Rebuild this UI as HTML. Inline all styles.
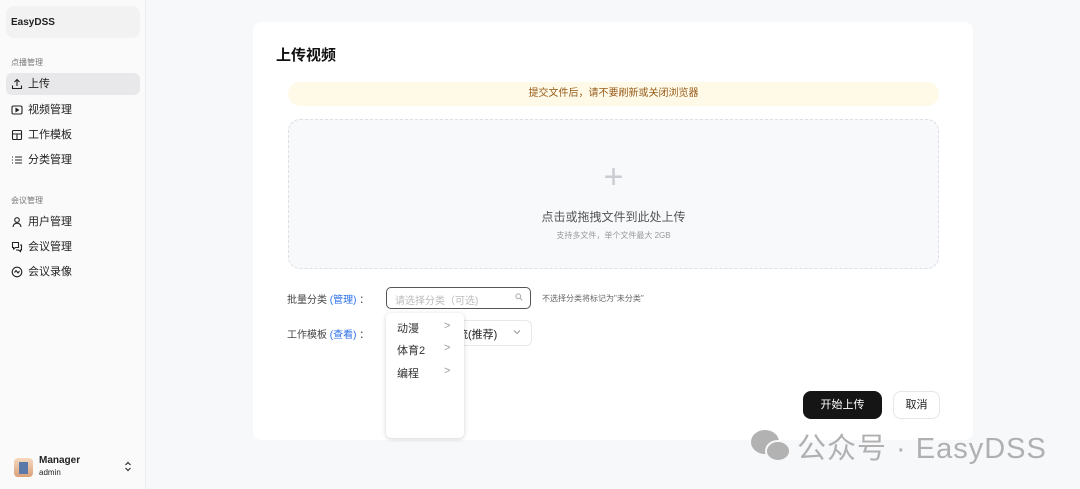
<!DOCTYPE html>
<html><head><meta charset="utf-8"><style>
*{margin:0;padding:0;box-sizing:border-box}
body{width:1080px;height:489px;overflow:hidden;background:#f7f8fa;font-family:"Liberation Sans","Noto Sans CJK SC",sans-serif;position:relative;color:#222}
.abs{position:absolute}
.side{left:0;top:0;width:146px;height:489px;background:#fafafa;border-right:1px solid #ececec}
.brand{left:6px;top:6px;width:134px;height:32px;background:#f2f2f2;border-radius:8px;font-size:10px;font-weight:bold;padding:11px 5px;color:#222}
.sec{font-size:8px;color:#777;left:11px}
.item{left:6px;width:134px;height:22px;border-radius:6px;font-size:11px;line-height:22px;padding-left:22px;color:#222}
.item svg{position:absolute;left:5px;top:5px}
.act{background:#e8e8ea}
.card{left:253px;top:22px;width:720px;height:418px;background:#fff;border-radius:8px}
.blue{color:#2a6ee8}
</style></head><body>
<div class="abs side">
<div class="abs brand">EasyDSS</div>
<div class="abs sec" style="top:57px">点播管理</div>
<div class="abs item act" style="top:73px"><svg width="12" height="12" viewBox="0 0 12 12" fill="none" stroke="#222" stroke-width="1.1"><path d="M6 8V1.5M3.5 4L6 1.5 8.5 4M1.5 7.5v3h9v-3"/></svg>上传</div>
<div class="abs item" style="top:99px"><svg width="12" height="12" viewBox="0 0 12 12" fill="none" stroke="#222" stroke-width="1.1"><rect x="1" y="2" width="10" height="8" rx="1.5"/><path d="M5 4.5v3l2.5-1.5z" fill="#222"/></svg>视频管理</div>
<div class="abs item" style="top:124px"><svg width="12" height="12" viewBox="0 0 12 12" fill="none" stroke="#222" stroke-width="1.1"><rect x="1.5" y="1.5" width="9" height="9" rx="1"/><path d="M1.5 5h9M6 5v5.5"/></svg>工作模板</div>
<div class="abs item" style="top:149px"><svg width="12" height="12" viewBox="0 0 12 12" fill="none" stroke="#222" stroke-width="1.1"><path d="M1 3h1M4 3h7M1 6h1M4 6h7M1 9h1M4 9h7"/></svg>分类管理</div>
<div class="abs sec" style="top:195px">会议管理</div>
<div class="abs item" style="top:211px"><svg width="12" height="12" viewBox="0 0 12 12" fill="none" stroke="#222" stroke-width="1.1"><circle cx="6" cy="4" r="2.3"/><path d="M2 11c0-2.5 2-3.8 4-3.8s4 1.3 4 3.8"/></svg>用户管理</div>
<div class="abs item" style="top:236px"><svg width="12" height="12" viewBox="0 0 12 12" fill="none" stroke="#222" stroke-width="1.1"><path d="M1.5 1.5h6v5h-3l-2 1.5v-1.5h-1zM9 4h1.5v5h-1v1.5l-2-1.5H5"/></svg>会议管理</div>
<div class="abs item" style="top:261px"><svg width="12" height="12" viewBox="0 0 12 12" fill="none" stroke="#222" stroke-width="1.1"><circle cx="6" cy="6" r="4.8"/><path d="M3.5 6.5l1.5-2 2 2.5 1.5-2"/></svg>会议录像</div>
<div class="abs" style="left:14px;top:458px;width:19px;height:19px;border-radius:4px;background:linear-gradient(#f6d9c0,#d9a07a)"><div style="margin:4px 5px;width:9px;height:12px;background:#5a79a8"></div></div>
<div class="abs" style="left:39px;top:455px;font-size:10px;font-weight:bold">Manager</div>
<div class="abs" style="left:39px;top:468px;font-size:8px">admin</div>
<svg class="abs" style="left:124px;top:461px" width="8" height="11" viewBox="0 0 8 11" fill="none" stroke="#333" stroke-width="1.2"><path d="M1.5 4L4 1.5 6.5 4M1.5 7L4 9.5 6.5 7"/></svg>
</div>
<div class="abs card"></div>
<div class="abs" style="left:276px;top:44px;font-size:15px;font-weight:bold;color:#111">上传视频</div>
<div class="abs" style="left:288px;top:82px;width:651px;height:24px;background:#fffae8;border-radius:12px;text-align:center;font-size:10px;line-height:24px;color:#955a18">提交文件后，请不要刷新或关闭浏览器</div>
<div class="abs" style="left:288px;top:119px;width:651px;height:150px;background:#f8f9fb;border:1px dashed #dcdfe5;border-radius:12px;text-align:center">
<div style="margin-top:40px;font-size:34px;font-weight:300;color:#c9ccd2;line-height:34px">+</div>
<div style="margin-top:14px;font-size:12px;color:#555">点击或拖拽文件到此处上传</div>
<div style="margin-top:5px;font-size:8px;color:#999">支持多文件，单个文件最大 2GB</div>
</div>
<div class="abs" style="left:287px;top:291px;font-size:10px;color:#444">批量分类 <span class="blue">(管理)</span> ：</div>
<div class="abs" style="left:386px;top:287px;width:145px;height:22px;border:1px solid #555;border-radius:5px;font-size:10px;color:#bbb;padding:4px 8px">请选择分类（可选)</div>
<svg class="abs" style="left:515px;top:293px" width="8" height="8" viewBox="0 0 8 8" fill="none" stroke="#aaa" stroke-width="1"><circle cx="3.3" cy="3.3" r="2.4"/><path d="M5 5l2.3 2.3"/></svg>
<div class="abs" style="left:542px;top:293px;font-size:8px;color:#666">不选择分类将标记为"未分类"</div>
<div class="abs" style="left:287px;top:326px;font-size:10px;color:#444">工作模板 <span class="blue">(查看)</span> ：</div>
<div class="abs" style="left:386px;top:320px;width:146px;height:26px;border:1px solid #e8e8e8;border-radius:6px"></div>
<div class="abs" style="left:457px;top:326px;font-size:11px;color:#222">流(推荐)</div>
<svg class="abs" style="left:513px;top:329px" width="8" height="6" viewBox="0 0 8 6" fill="none" stroke="#999" stroke-width="1"><path d="M1 1.5L4 4.5 7 1.5"/></svg>
<div class="abs" style="left:386px;top:313px;width:78px;height:125px;background:#fff;border-radius:5px;box-shadow:0 1px 5px rgba(0,0,0,.18);font-size:11px;color:#333">
<div style="position:absolute;left:11px;top:7px">动漫</div><div style="position:absolute;left:58px;top:7px;color:#999">&gt;</div>
<div style="position:absolute;left:11px;top:29px">体育2</div><div style="position:absolute;left:58px;top:29px;color:#999">&gt;</div>
<div style="position:absolute;left:11px;top:52px">编程</div><div style="position:absolute;left:58px;top:52px;color:#999">&gt;</div>
</div>
<div class="abs" style="left:803px;top:391px;width:79px;height:28px;background:#151515;border-radius:8px;color:#fff;font-size:11px;text-align:center;line-height:28px">开始上传</div>
<div class="abs" style="left:893px;top:391px;width:47px;height:28px;background:#fff;border:1px solid #e6e6e6;border-radius:8px;font-size:11px;text-align:center;line-height:26px">取消</div>
<svg class="abs" style="left:749px;top:428px" width="44" height="36" viewBox="0 0 44 36"><ellipse cx="16" cy="14" rx="14" ry="12" fill="#b2b2b2"/><ellipse cx="29" cy="23" rx="12" ry="10" fill="#b2b2b2" stroke="#f7f8fa" stroke-width="2"/></svg>
<div class="abs" style="left:797px;top:425px;font-size:29px;color:#b0b0b0;letter-spacing:1px">公众号 · EasyDSS</div>
</body></html>
